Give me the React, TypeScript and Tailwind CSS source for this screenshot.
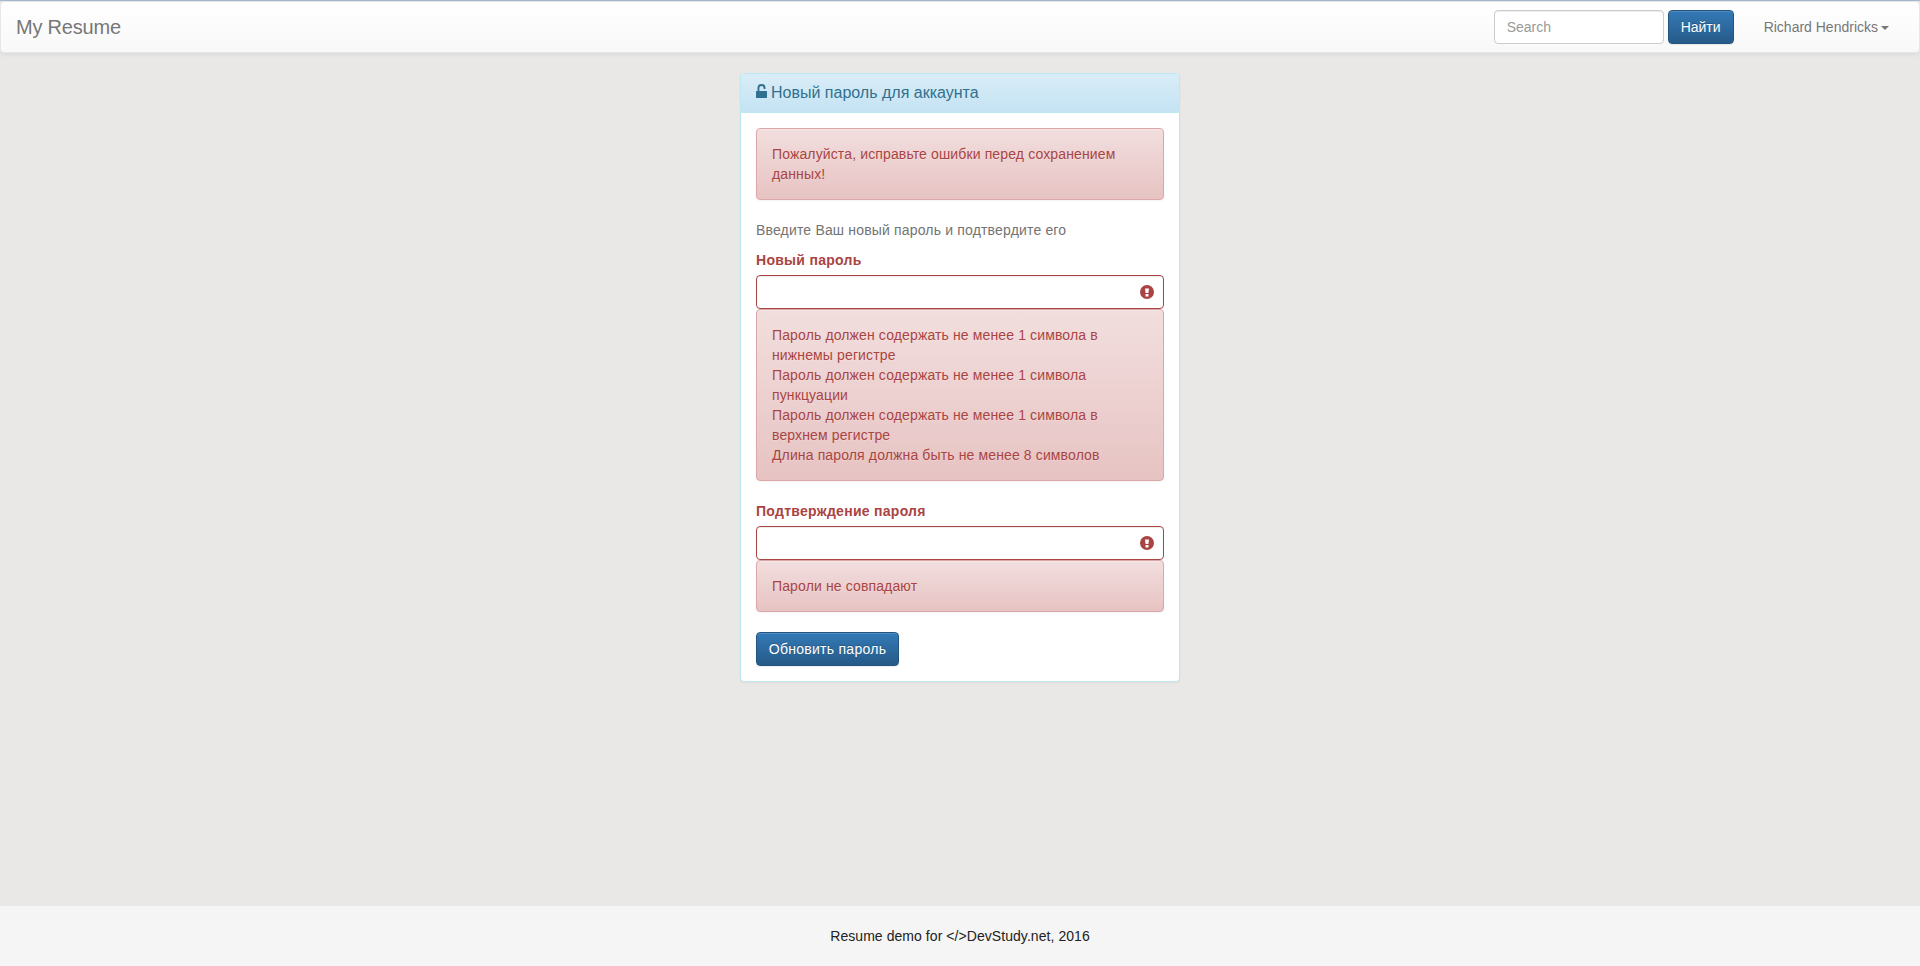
import React from "react";

const buttonClass =
  "h-[34px] rounded border border-[#245580] bg-linear-to-b from-[#337ab7] to-[#265a88] text-sm leading-5 text-white [text-shadow:0_-1px_0_rgba(0,0,0,0.2)] shadow-[inset_0_1px_0_rgba(255,255,255,0.15),0_1px_1px_rgba(0,0,0,0.075)]";

function UnlockIcon() {
  return (
    <svg viewBox="0 0 11 14" className="mt-px h-[14px] w-[11px] shrink-0" fill="currentColor">
      <path d="M.5 7H1.500V4a4 4 0 0 1 8 0v.5a.5.5 0 0 1-.5.5h-.9a.5.5 0 0 1-.5-.5V4a2.100 2.100 0 0 0-4.200 0V7H10.500a.5.5 0 0 1 .5.5v6a.5.5 0 0 1-.5.5H.5a.5.5 0 0 1-.5-.5v-6A.5.5 0 0 1 .5 7z" />
    </svg>
  );
}

function ExclamationIcon() {
  return (
    <svg viewBox="0 0 14 14" className="h-[14px] w-[14px]">
      <circle cx="7" cy="7" r="7" fill="#a94442" />
      <path d="M5 3.500h4l-.6 4.500H5.600z" fill="#fff" />
      <path d="M5.500 9h3v2.500h-3z" fill="#fff" />
    </svg>
  );
}

function Alert({ lines }: { lines: string[] }) {
  return (
    <div className="mb-5 rounded border border-[#dca7a7] bg-linear-to-b from-[#f2dede] to-[#e7c3c3] p-[15px] tracking-[0.13px] text-[#a94442] [text-shadow:0_1px_0_rgba(255,255,255,0.2)] shadow-[inset_0_1px_0_rgba(255,255,255,0.25),0_1px_2px_rgba(0,0,0,0.05)]">
      {lines.map((line) => (
        <div key={line}>{line}</div>
      ))}
    </div>
  );
}

function PasswordField({ id, label, errors }: { id: string; label: string; errors: string[] }) {
  return (
    <div>
      <label htmlFor={id} className="mb-[5px] block font-bold tracking-[0.28px] text-[#a94442]">
        {label}
      </label>
      <div className="flex h-[34px] items-center rounded border border-[#a94442] bg-white pr-[9px] shadow-[inset_0_1px_1px_rgba(0,0,0,0.075)]">
        <input id={id} type="password" className="h-full min-w-0 flex-1 bg-transparent px-3 outline-none" />
        <ExclamationIcon />
      </div>
      <Alert lines={errors} />
    </div>
  );
}

export default function App() {
  return (
    <div className="flex min-h-screen flex-col border-t border-[#a9bbd4] bg-[#e9e8e6] font-['Liberation_Sans',Arial,sans-serif] text-sm leading-5 text-[#222]">
      <nav className="flex h-[52px] items-center rounded border border-[#e7e7e7] bg-linear-to-b from-white to-[#f8f8f8] pr-[30px] pl-[15px] text-[#777] shadow-[inset_0_1px_0_rgba(255,255,255,0.15),0_1px_5px_rgba(0,0,0,0.075)]">
        <a className="text-xl leading-5 tracking-[-0.2px] [text-shadow:0_1px_0_rgba(255,255,255,0.25)]">My Resume</a>
        <form className="ml-auto flex gap-1">
          <input
            placeholder="Search"
            className="h-[34px] w-[170px] rounded border border-[#ccc] bg-white px-3 text-sm shadow-[inset_0_1px_1px_rgba(0,0,0,0.075)] outline-none placeholder:text-[#999]"
          />
          <button type="button" className={buttonClass + " w-[66px]"}>
            Найти
          </button>
        </form>
        <a className="ml-[30px] flex items-center gap-[3px] [text-shadow:0_1px_0_rgba(255,255,255,0.25)]">
          Richard Hendricks
          <span className="mt-px border-x-4 border-t-4 border-x-transparent border-t-[#777]" />
        </a>
      </nav>

      <main className="mt-5 flex-1">
        <section className="mx-auto w-[440px] rounded border border-[#bce8f1] bg-white shadow-[0_1px_2px_rgba(0,0,0,0.05)]">
          <h3 className="flex h-[39px] items-start gap-1 rounded-t-[3px] border-b border-[#bce8f1] bg-linear-to-b from-[#d9edf7] to-[#c4e3f3] px-[15px] pt-[9px] text-base leading-5 text-[#31708f]">
            <UnlockIcon />
            <span>Новый пароль для аккаунта</span>
          </h3>
          <div className="p-[15px]">
            <Alert lines={["Пожалуйста, исправьте ошибки перед сохранением данных!"]} />
            <p className="mb-[10px] tracking-[0.17px] text-[#737373]">Введите Ваш новый пароль и подтвердите его</p>
            <PasswordField
              id="password"
              label="Новый пароль"
              errors={[
                "Пароль должен содержать не менее 1 символа в нижнемы регистре",
                "Пароль должен содержать не менее 1 символа пункцуации",
                "Пароль должен содержать не менее 1 символа в верхнем регистре",
                "Длина пароля должна быть не менее 8 символов",
              ]}
            />
            <PasswordField id="confirm" label="Подтверждение пароля" errors={["Пароли не совпадают"]} />
            <button type="button" className={buttonClass + " block w-[143px] tracking-[0.27px]"}>
              Обновить пароль
            </button>
          </div>
        </section>
      </main>

      <footer className="flex h-[60px] items-center justify-center bg-[#f5f5f5]">
        <span className="tracking-[0.06px]">Resume demo for &lt;/&gt;DevStudy.net, 2016</span>
      </footer>
    </div>
  );
}
